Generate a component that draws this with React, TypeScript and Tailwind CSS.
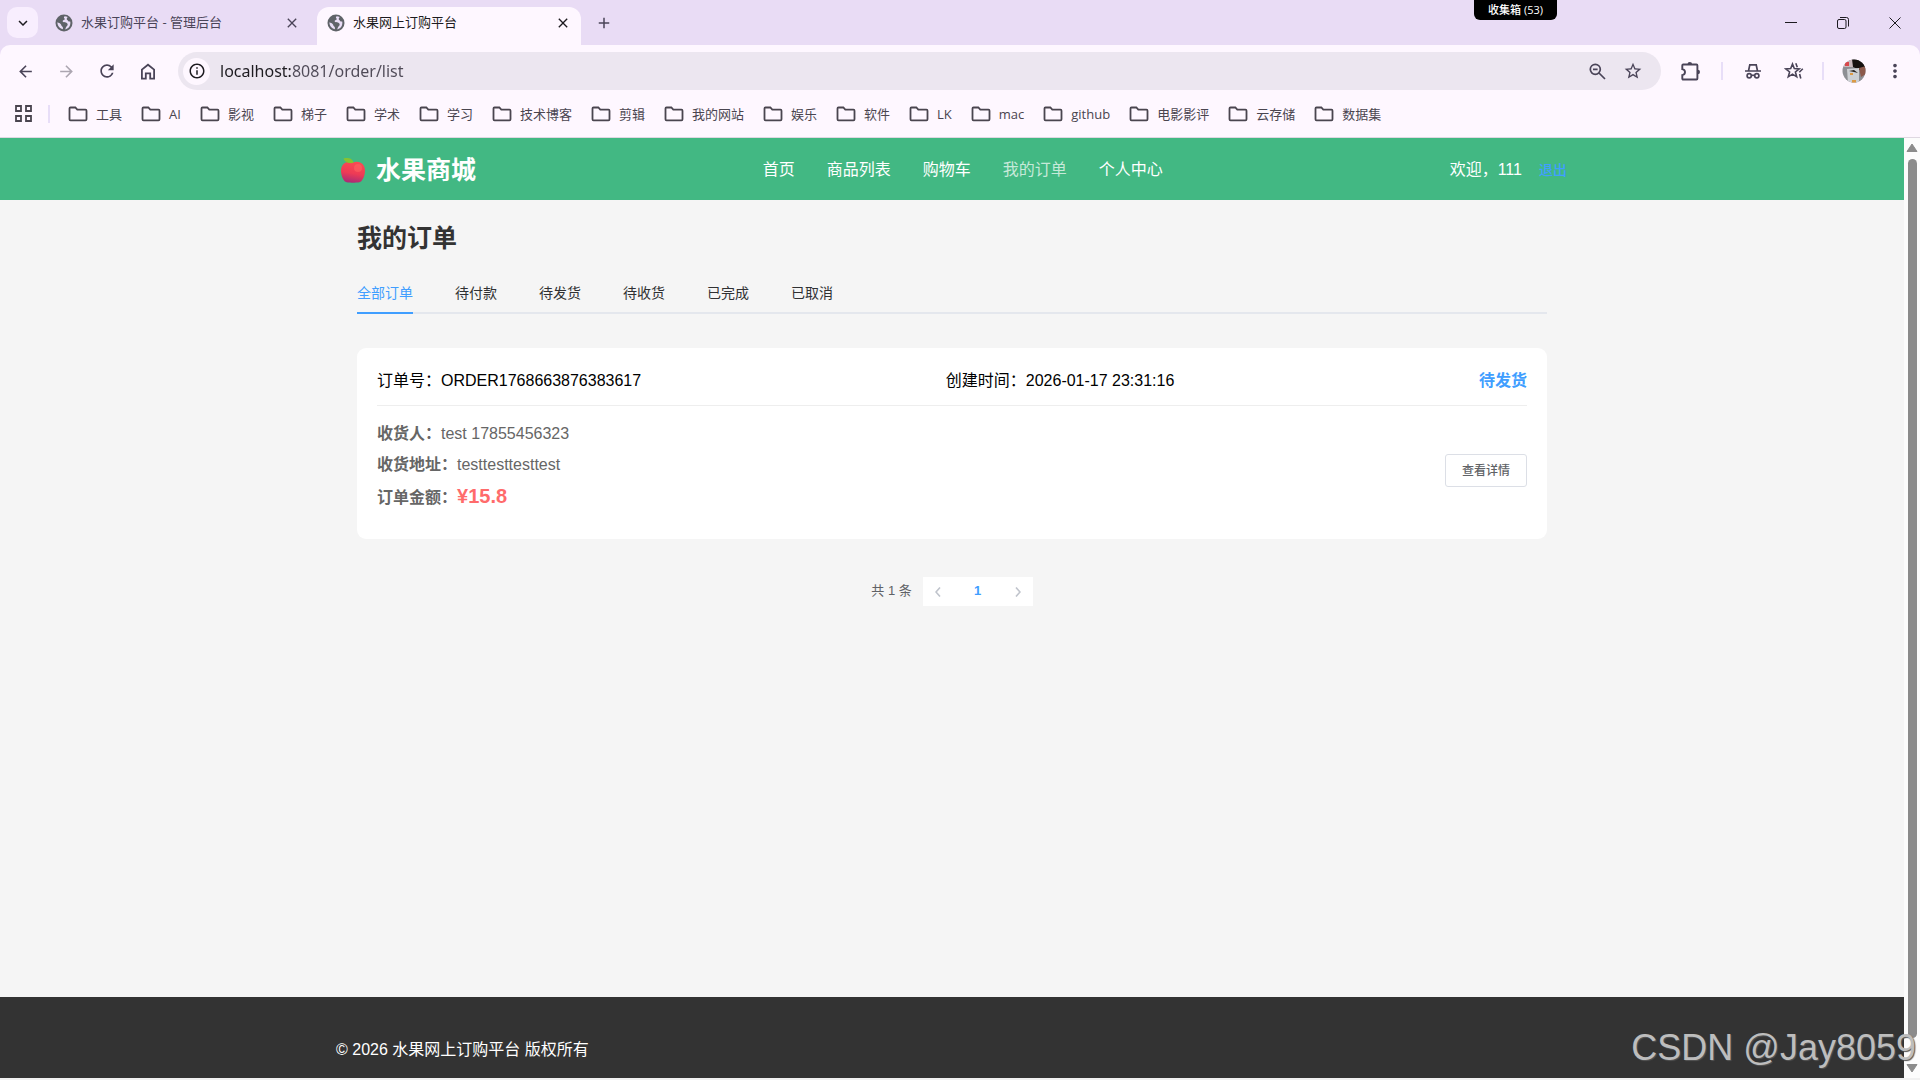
import type { ReactNode } from "react";
import {
    MdArrowBack,
    MdArrowForward,
    MdClose,
    MdExpandMore,
    MdMoreVert,
    MdOutlineInfo,
    MdRefresh,
    MdStarOutline,
    MdAdd,
} from "react-icons/md";

const bookmarks = [
    "工具", "AI", "影视", "梯子", "学术", "学习", "技术博客", "剪辑", "我的网站",
    "娱乐", "软件", "LK", "mac", "github", "电影影评", "云存储", "数据集",
];

const navLinks = ["首页", "商品列表", "购物车", "我的订单", "个人中心"];

const orderTabs = ["全部订单", "待付款", "待发货", "待收货", "已完成", "已取消"];

function GlobeIcon() {
    return (
        <svg viewBox="0 0 18 18" className="h-[18px] w-[18px] shrink-0">
            <circle cx="9" cy="9" r="8.5" fill="#5f6368" />
            <path
                d="M9.6 2.2C8.6 3 8.8 4 9.6 4.6c.8.6-.2 1.4-1.2 1.6-1 .3-.8 1.5-.2 1.9.8.4 2.600.2 3.600.8 1.300.8 1 2.300.1 3.100-.9.8-1.200 2-1.700 3.500 3.200-.8 5.200-3.300 5.200-6.500 0-.6-.1-1.100-.2-1.600-.8.3-1.800.1-2.200-.7-.3-.7-1.300-.7-1.300-1.700 0-.9.7-1.300.9-2-.8-.5-1.900-.8-3-.8zM2.400 8.300c0 3.500 2.200 6.200 5.300 6.900.5-.9.3-2.100-.5-2.700-.9-.6-.8-1.500-1.400-2.300-.8-.9-2.200-1.300-3.400-1.900z"
                fill="#e9ddf6"
            />
        </svg>
    );
}

function FolderIcon() {
    return (
        <svg viewBox="0 0 20 16" className="h-4 w-5 shrink-0" fill="none" stroke="#4a454f" strokeWidth="1.8">
            <path d="M2.500 1.500h4.800l2 2.200h8.200c.6 0 1 .4 1 1v8.600c0 .6-.4 1-1 1h-15c-.6 0-1-.4-1-1V2.500c0-.6.4-1 1-1z" />
        </svg>
    );
}

function AppleIcon() {
    return (
        <svg viewBox="0 0 24 25" className="h-[25px] w-6">
            <defs>
                <linearGradient id="apple" x1="0.6" y1="0" x2="0.4" y2="1">
                    <stop offset="0" stopColor="#fb4a52" />
                    <stop offset="0.55" stopColor="#ee3b55" />
                    <stop offset="1" stopColor="#a82a78" />
                </linearGradient>
            </defs>
            <path
                d="M12 4.600c2-1 4.800-1.200 7.200-.2 3.200 1.400 4.800 4.600 4.800 8.200 0 4.600-1.800 9.400-4.400 11.200-1.600 1.100-3.200.6-4.600.6-1 0-2 .4-3 .4s-2-.4-3-.4c-1.400 0-3 .5-4.600-.6C1.800 22 0 17.200 0 12.600 0 9 1.600 5.800 4.800 4.400 7.200 3.400 10 3.600 12 4.600z"
                fill="url(#apple)"
            />
            <circle cx="17" cy="10" r="4" fill="#ff6a63" opacity="0.5" />
            <path d="M2.500.5C6-.3 11.500-.4 12.500 5 9 5.500 4 5 2.500.5z" fill="#86c232" />
        </svg>
    );
}

function HomeIcon() {
    return (
        <svg viewBox="0 0 16 17" className="h-[17px] w-4" fill="none" stroke="currentColor" strokeWidth="1.8">
            <path d="M1.900 15.600V6.600L8 1.700l6.100 4.900v9H10.200v-5.200H5.800v5.200z" />
        </svg>
    );
}

function ZoomOutIcon() {
    return (
        <svg viewBox="0 0 17 17" className="h-[17px] w-[17px]" fill="none" stroke="currentColor" strokeWidth="1.700">
            <circle cx="6.300" cy="6.300" r="5" />
            <path d="M10 10l6 6M4 6.300h4.600" />
        </svg>
    );
}

function PuzzleIcon() {
    return (
        <svg viewBox="0 0 20 20" className="h-5 w-5" fill="none" stroke="currentColor" strokeWidth="1.900">
            <path d="M2.200 3.500h13.300c.5 0 .9.4.9.9v13.200c0 .5-.4.9-.9.9H2.200c-.5 0-.9-.4-.9-.9v-3.500c3.600-.6 3.600-5.400 0-6V4.400c0-.5.4-.9.9-.9z" />
            <path d="M6.500 3.200a2.300 2.300 0 0 1 4.600 0zM16.700 8.700a2.300 2.300 0 0 1 0 4.600z" fill="currentColor" stroke="none" />
        </svg>
    );
}

function IncognitoIcon() {
    return (
        <svg viewBox="0 0 18 18" className="h-[18px] w-[18px]" fill="none" stroke="currentColor" strokeWidth="1.700">
            <path d="M1 9h16M4.500 9l1.300-6.200h6.400L13.500 9" />
            <circle cx="5.200" cy="13.700" r="2.100" />
            <circle cx="12.800" cy="13.700" r="2.100" />
            <path d="M7.500 13.300h3" />
        </svg>
    );
}

function ReadingStarIcon() {
    return (
        <svg viewBox="0 0 20 18" className="h-[18px] w-5" fill="none" stroke="currentColor" strokeWidth="1.600">
            <path d="M8.500 2l1.800 4.600 4.900.3-3.800 3.100 1.300 4.800-4.200-2.700-4.200 2.700 1.300-4.800L1.800 6.900l4.900-.3z" />
            <path d="M11.800 1.200l1.500 4M18.800 6.800l-3.500 3.400M15.600 12l1.200 4.500" />
        </svg>
    );
}

function ToolButton({ label, className = "", children }: { label: string; className?: string; children: ReactNode }) {
    return (
        <button aria-label={label} className={`flex h-7 w-7 items-center justify-center ${className}`}>
            {children}
        </button>
    );
}

function TabStrip() {
    return (
        <div className="relative flex h-[45px] items-start bg-[#e9dcf5] pl-[7px] text-[13px] text-[#4a4458]">
            <button aria-label="搜索标签页" className="mt-[7px] flex h-[31px] w-[31px] items-center justify-center rounded-[10px] bg-[#f8eefe] text-[#1d1b20]">
                <MdExpandMore size={18} />
            </button>
            <div className="mt-[7px] flex h-8 w-[279px] items-center pr-[17px] pl-[17px]">
                <GlobeIcon />
                <span className="ml-2 flex-1">水果订购平台 - 管理后台</span>
                <button aria-label="关闭">
                    <MdClose size={16} />
                </button>
            </div>
            <div className="mt-[7px] flex h-[38px] w-[264px] items-start rounded-t-[12px] bg-[#fef7ff] text-[#1d1b20]">
                <div className="flex h-8 w-full items-center pr-[10px] pl-[10px]">
                    <GlobeIcon />
                    <span className="ml-2 flex-1">水果网上订购平台</span>
                    <button aria-label="关闭">
                        <MdClose size={16} />
                    </button>
                </div>
            </div>
            <button aria-label="新标签页" className="mt-[7px] ml-[14px] flex h-8 w-[18px] items-center justify-center">
                <MdAdd size={18} />
            </button>
            <div className="absolute top-0 right-[363px] h-5 w-[83px] rounded-b-[6px] bg-black text-center text-[11px] leading-5 font-medium text-white">
                收集箱 (53)
            </div>
            <div className="mt-[7px] mr-[16px] ml-auto flex h-8 items-center gap-[34px] text-[#1d1b20]">
                <button aria-label="最小化" className="flex h-[18px] w-[18px] items-center justify-center">
                    <svg viewBox="0 0 12 12" className="h-3 w-3" stroke="currentColor">
                        <path d="M0 5.500h12" />
                    </svg>
                </button>
                <button aria-label="还原" className="flex h-[18px] w-[18px] items-center justify-center">
                    <svg viewBox="0 0 12 12" className="h-3 w-3" fill="none" stroke="currentColor">
                        <rect x="0.5" y="2.500" width="8.500" height="9" rx="1.500" />
                        <path d="M3 .5h6.500a2 2 0 0 1 2 2V9.500" />
                    </svg>
                </button>
                <button aria-label="关闭窗口" className="flex h-[18px] w-[18px] items-center justify-center">
                    <svg viewBox="0 0 12 12" className="h-3 w-3" stroke="currentColor">
                        <path d="M.5.500l11 11M11.500.5l-11 11" />
                    </svg>
                </button>
            </div>
        </div>
    );
}

function AddressBar() {
    return (
        <div className="flex h-[52px] items-center rounded-t-[10px] bg-[#fef7ff] pr-[11px] pl-[11px] text-[#4a4458]">
            <div className="flex gap-[13px]">
                <ToolButton label="后退"><MdArrowBack size={19} /></ToolButton>
                <ToolButton label="前进" className="text-[#aca6b1]"><MdArrowForward size={19} /></ToolButton>
                <ToolButton label="刷新"><MdRefresh size={20} /></ToolButton>
                <ToolButton label="主页"><HomeIcon /></ToolButton>
            </div>
            <div className="ml-4 flex h-[38px] flex-1 items-center rounded-full bg-[#ece6f0] pr-[14px] pl-[5px]">
                <span className="flex h-[27px] w-[27px] items-center justify-center rounded-full bg-[#fef7ff] text-[#1d1b20]">
                    <MdOutlineInfo size={18} />
                </span>
                <input
                    aria-label="地址"
                    defaultValue="localhost:8081/order/list"
                    className="ml-[10px] h-7 flex-1 bg-linear-to-r from-[#1d1b20] from-[71px] to-[#4f4a57] to-[71px] bg-clip-text font-['Noto_Sans',sans-serif] text-[16px] text-transparent outline-none"
                />
                <ToolButton label="缩小"><ZoomOutIcon /></ToolButton>
                <ToolButton label="收藏" className="ml-2"><MdStarOutline size={20} /></ToolButton>
            </div>
            <ToolButton label="扩展程序" className="ml-4"><PuzzleIcon /></ToolButton>
            <div className="ml-4 h-[18px] w-[2px] bg-[#e8def8]" />
            <ToolButton label="无痕" className="ml-4"><IncognitoIcon /></ToolButton>
            <ToolButton label="阅读清单" className="ml-[13px]"><ReadingStarIcon /></ToolButton>
            <div className="ml-[14px] h-[18px] w-[2px] bg-[#e8def8]" />
            <ToolButton label="用户" className="ml-4">
                <svg viewBox="0 0 24 24" className="h-6 w-6">
                    <clipPath id="avatar"><circle cx="12" cy="12" r="11.500" /></clipPath>
                    <g clipPath="url(#avatar)">
                        <path d="M0 0h24v24H0z" fill="#8d8f94" />
                        <path d="M0 0h11v8H0z" fill="#c9b9bd" />
                        <path d="M3 3h4v4H3z" fill="#d8474c" />
                        <path d="M10 0h14v9l-6 2-7-3z" fill="#15110f" />
                        <path d="M17 9l7-2v8l-5 3z" fill="#8c5a4c" />
                        <path d="M5 10l12-1v15H6z" fill="#cdd0d4" />
                        <path d="M7 12l5-1 4 3-4-1z" fill="#2b2520" />
                        <path d="M8 14h3v2H8zM10 21h4v3h-4z" fill="#dc9a45" />
                    </g>
                </svg>
            </ToolButton>
            <ToolButton label="菜单" className="ml-[13px]"><MdMoreVert size={22} /></ToolButton>
        </div>
    );
}

function BookmarkBar() {
    return (
        <div className="flex h-[41px] items-center border-b border-[#dfd8e2] bg-[#fef7ff] pb-[7px] pl-[15px] text-[13px] text-[#4a454f]">
            <button aria-label="应用">
                <svg viewBox="0 0 17 17" className="h-[17px] w-[17px]" fill="none" stroke="currentColor" strokeWidth="1.800">
                    <path d="M1 1h5v5H1zM11 1h5v5h-5zM1 11h5v5H1zM11 11h5v5h-5z" />
                </svg>
            </button>
            <div className="mr-[18px] ml-4 h-[18px] w-[2px] bg-[#e8def8]" />
            <div className="flex gap-[19px]">
                {bookmarks.map((name) => (
                    <a key={name} href="#" className="flex items-center gap-2 leading-5">
                        <FolderIcon />
                        {name}
                    </a>
                ))}
            </div>
        </div>
    );
}

function ShopHeader() {
    return (
        <header className="bg-[#42b883] px-4 text-white">
            <div className="mx-auto flex h-[62px] max-w-[1230px] items-center justify-between pt-[2px]">
                <a href="#" className="flex items-center gap-[11px] pl-1 text-[25px] font-bold">
                    <AppleIcon />
                    水果商城
                </a>
                <nav className="flex gap-8">
                    {navLinks.map((link) => (
                        <a key={link} href="#" className={link === "我的订单" ? "text-[#c6e9d9]" : ""}>
                            {link}
                        </a>
                    ))}
                </nav>
                <div className="flex items-center gap-[17px]">
                    <span>欢迎，111</span>
                    <button className="text-[14px] font-medium text-[#409eff]">退出</button>
                </div>
            </div>
        </header>
    );
}

function OrderCard() {
    return (
        <section className="mt-[34px] rounded-[9px] bg-white px-5 pt-[21px] pb-5">
            <div className="flex justify-between border-b border-[#eeeeee] pb-3 text-black">
                <span>订单号：ORDER1768663876383617</span>
                <span>创建时间：2026-01-17 23:31:16</span>
                <span className="font-bold text-[#409eff]">待发货</span>
            </div>
            <div className="flex items-center justify-between pt-4">
                <div className="text-[#666]">
                    <p className="mb-[7px]"><strong>收货人：</strong>test 17855456323</p>
                    <p className="mb-[7px]"><strong>收货地址：</strong>testtesttesttest</p>
                    <p className="mb-[9px]">
                        <strong>订单金额：</strong>
                        <span className="text-[20px] leading-6 font-bold text-[#ff6b6b]">¥15.8</span>
                    </p>
                </div>
                <button className="h-[33px] rounded-[3px] border border-[#dcdfe6] px-4 text-[12px] font-medium text-[#606266]">
                    查看详情
                </button>
            </div>
        </section>
    );
}

function Pagination() {
    return (
        <div className="mt-[38px] flex items-center justify-center gap-[11px] text-[13px] text-[#606266]">
            <span className="pb-[2px]">共 1 条</span>
            <div className="flex h-[29px] items-center bg-white">
                <button aria-label="上一页" className="flex w-[30px] justify-center">
                    <svg viewBox="0 0 6 10" className="h-[10px] w-[6px]" fill="none" stroke="#c0c4cc" strokeWidth="1.600">
                        <path d="M5 .5L1 5l4 4.500" />
                    </svg>
                </button>
                <button className="w-[50px] pb-[2px] font-bold text-[#409eff]">1</button>
                <button aria-label="下一页" className="flex w-[30px] justify-center">
                    <svg viewBox="0 0 6 10" className="h-[10px] w-[6px]" fill="none" stroke="#c0c4cc" strokeWidth="1.600">
                        <path d="M1 .5L5 5 1 9.500" />
                    </svg>
                </button>
            </div>
        </div>
    );
}

function ScrollBar() {
    return (
        <div className="flex w-4 shrink-0 flex-col items-center bg-[#fcfcfc] pt-[5px] pb-[5px]">
            <svg viewBox="0 0 12 10" className="h-[10px] w-3"><path d="M6 1l5 7.500H1z" fill="#8b8b8b" stroke="#8b8b8b" strokeLinejoin="round" /></svg>
            <div className="mt-[6px] mb-[25px] w-[9px] flex-1 rounded-full bg-[#8b8b8b]" />
            <svg viewBox="0 0 12 10" className="h-[10px] w-3"><path d="M6 9L1 1.500h10z" fill="#8b8b8b" stroke="#8b8b8b" strokeLinejoin="round" /></svg>
        </div>
    );
}

export default function App() {
    return (
        <div className="relative flex h-screen flex-col overflow-hidden border-b-2 border-[#f1f1f1] bg-[#e9dcf5] font-['Liberation_Sans','Noto_Sans_CJK_SC',sans-serif]">
            <div className="font-['Open_Sans','Noto_Sans_CJK_SC',sans-serif]">
                <TabStrip />
                <AddressBar />
                <BookmarkBar />
            </div>
            <div className="flex min-h-0 flex-1">
                <div className="flex flex-1 flex-col bg-[#f5f5f5] text-[16px] leading-6">
                    <ShopHeader />
                    <main className="mx-auto w-full max-w-[1190px] flex-1">
                        <h1 className="mt-[21px] text-[25px] leading-[34px] font-bold text-[#333]">我的订单</h1>
                        <div className="mt-5 flex gap-[42px] border-b-2 border-[#e4e7ed] text-[14px] text-[#303133]">
                            {orderTabs.map((tab, i) => (
                                <button
                                    key={tab}
                                    className={`-mb-[2px] h-[39px] border-b-2 pb-[2px] ${i === 0 ? "border-[#409eff] text-[#409eff]" : "border-transparent"}`}
                                >
                                    {tab}
                                </button>
                            ))}
                        </div>
                        <OrderCard />
                        <Pagination />
                    </main>
                    <footer className="bg-[#333] pt-[41px] pb-4 text-white">
                        <p className="mx-auto max-w-[1232px]">© 2026 水果网上订购平台 版权所有</p>
                    </footer>
                </div>
                <ScrollBar />
            </div>
            <div className="absolute right-1 bottom-1 font-['Liberation_Sans',sans-serif] text-[36px] leading-[52px] text-[#bdbdbd] [text-shadow:1px_1px_1px_#555]">
                CSDN @Jay8059
            </div>
        </div>
    );
}
